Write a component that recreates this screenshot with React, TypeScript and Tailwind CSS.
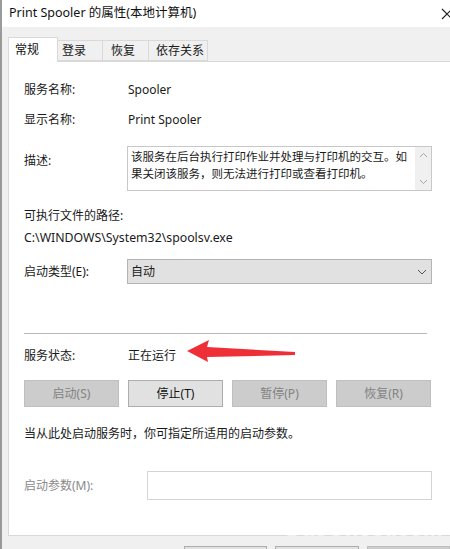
import React from "react";

const font = { fontFamily: '"Noto Sans", "Noto Sans CJK SC", sans-serif' };

function Btn({ label, disabled }: { label: string; disabled?: boolean }) {
  return (
    <div
      className={
        "w-[95px] h-[27px] flex items-center justify-center border text-[12px] " +
        (disabled
          ? "bg-[#cccccc] border-[#bfbfbf] text-[#838383]"
          : "bg-[#e1e1e1] border-[#adadad] text-[#111]")
      }
    >
      {label}
    </div>
  );
}

export default function App() {
  return (
    <div
      className="relative w-[450px] h-[549px] overflow-hidden bg-[#f0f0f0] border-l-2 border-[#9a9a9a] text-[12px] text-[#1a1a1a]"
      style={font}
    >
      {/* Title bar */}
      <div className="h-[27px] bg-white flex items-center justify-between pl-[7px] pr-0">
        <span className="text-[12.5px] text-[#111]">Print Spooler 的属性(本地计算机)</span>
        <svg width="12" height="12" viewBox="0 0 12 12" className="mr-[-3px]">
          <path d="M1 1 L11 11 M11 1 L1 11" stroke="#222" strokeWidth="1.2" />
        </svg>
      </div>

      {/* Tabs */}
      <div className="flex items-end h-[34px] pl-[6px]">
        <div className="w-[50px] h-[25px] bg-white border border-b-0 border-[#d9d9d9] flex items-center pl-[6px] text-[#111] relative z-10 mb-[-1px]">
          常规
        </div>
        <div className="w-[45px] h-[21px] border border-l-0 border-[#d9d9d9] bg-[#f0f0f0] flex items-center pl-[4px]">登录</div>
        <div className="w-[46px] h-[21px] border border-l-0 border-[#d9d9d9] bg-[#f0f0f0] flex items-center pl-[8px]">恢复</div>
        <div className="w-[59px] h-[21px] border border-l-0 border-[#d9d9d9] bg-[#f0f0f0] flex items-center pl-[7px]">依存关系</div>
      </div>

      {/* Panel */}
      <div className="ml-[6px] w-[460px] h-[475px] bg-white border border-[#d9d9d9] pl-[15px]">
        <div className="flex items-center h-[20px] mt-[18px]">
          <div className="w-[104px]">服务名称:</div>
          <div>Spooler</div>
        </div>
        <div className="flex items-center h-[20px] mt-[10px]">
          <div className="w-[104px]">显示名称:</div>
          <div>Print Spooler</div>
        </div>

        <div className="flex mt-[16px]">
          <div className="w-[103px] mt-[5px] h-[20px] flex items-center">描述:</div>
          <div className="w-[305px] h-[45px] border border-[#c8c8c8] flex">
            <div className="flex-1 pl-[3px] pt-[1px] leading-[17px] text-[11.5px]">
              该服务在后台执行打印作业并处理与打印机的交互。如果关闭该服务，则无法进行打印或查看打印机。
            </div>
            <div className="w-[16px] bg-[#f0f0f0] flex flex-col items-center justify-between py-[5px]">
              <svg width="9" height="6" viewBox="0 0 9 6">
                <path d="M1 5 L4.5 1.5 L8 5" stroke="#a6a6a6" fill="none" strokeWidth="1" />
              </svg>
              <svg width="9" height="6" viewBox="0 0 9 6">
                <path d="M1 1 L4.5 4.5 L8 1" stroke="#a6a6a6" fill="none" strokeWidth="1" />
              </svg>
            </div>
          </div>
        </div>

        <div className="h-[20px] flex items-center mt-[15px]">可执行文件的路径:</div>
        <div className="h-[20px] flex items-center mt-[2px] text-[12.3px]">C:\WINDOWS\System32\spoolsv.exe</div>

        <div className="flex items-center mt-[11px]">
          <div className="w-[103px]">启动类型(E):</div>
          <div className="w-[305px] h-[25px] bg-[#e1e1e1] border border-[#b4b4b4] flex items-center justify-between pl-[3px] pr-[4px]">
            <span>自动</span>
            <svg width="10" height="6" viewBox="0 0 10 6">
              <path d="M1 1 L5 5 L9 1" stroke="#555" fill="none" strokeWidth="1" />
            </svg>
          </div>
        </div>

        <div className="w-[403px] h-px bg-[#b9b9b9] mt-[49px]" />

        <div className="flex items-center h-[20px] mt-[12px]">
          <div className="w-[104px]">服务状态:</div>
          <div>正在运行</div>
        </div>

        <div className="flex gap-[9px] mt-[14px]">
          <Btn label="启动(S)" disabled />
          <Btn label="停止(T)" />
          <Btn label="暂停(P)" disabled />
          <Btn label="恢复(R)" disabled />
        </div>

        <div className="h-[20px] flex items-center mt-[17px]">当从此处启动服务时，你可指定所适用的启动参数。</div>

        <div className="flex items-center mt-[27px]">
          <div className="w-[123px] text-[#8a8a8a]">启动参数(M):</div>
          <div className="w-[285px] h-[29px] border border-[#d4d4d4] bg-white" />
        </div>
      </div>

      {/* Bottom buttons */}
      <div className="flex gap-[8px] pl-[182px] mt-[10px]">
        <div className="w-[86px] h-[24px] bg-[#e1e1e1] border border-[#adadad]" />
        <div className="w-[86px] h-[24px] bg-[#e1e1e1] border border-[#adadad]" />
        <div className="w-[86px] h-[24px] bg-[#cccccc] border border-[#bfbfbf]" />
      </div>

      {/* Red arrow annotation */}
      <svg className="absolute left-0 top-0 pointer-events-none" width="450" height="549">
        <polygon
          points="185,351 207,340 205,347 293,352 293,355 205,357 206,362"
          fill="#ef2f37"
        />
      </svg>

      {/* Watermark */}
      <div
        className="absolute left-[284px] top-[518px] text-[22px] font-bold text-white/60 leading-none pointer-events-none"
        style={{ fontFamily: '"Liberation Sans", sans-serif' }}
      >
        DaoGhost.com
      </div>
    </div>
  );
}
